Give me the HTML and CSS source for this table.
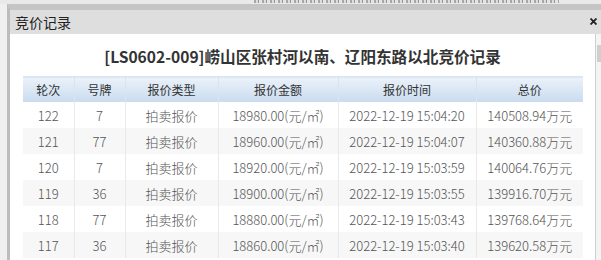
FILE: index.html
```html
<!DOCTYPE html>
<html lang="zh">
<head>
<meta charset="utf-8">
<link rel="stylesheet" href="styles.css">
</head>
<body>
<div class="page">
  <div class="topstrip"><div class="topmarks"></div></div>
  <div class="main">
    <div class="gutter"></div>
    <div class="dialog">
      <div class="titlebar">
        <span class="title">竞价记录</span>
        <svg class="close" width="7" height="7" viewBox="0 0 7 7"><path d="M0.5 0.5L6.5 6.5M6.5 0.5L0.5 6.5" stroke="#222" stroke-width="1.8"/></svg>
      </div>
      <div class="body">
        <div class="pane">
          <h1 class="heading">[LS0602-009]崂山区张村河以南、辽阳东路以北竞价记录</h1>
          <table class="grid">
            <colgroup>
              <col class="c1"><col class="c2"><col class="c3"><col class="c4"><col class="c5"><col class="c6">
            </colgroup>
            <thead>
              <tr><th>轮次</th><th>号牌</th><th>报价类型</th><th>报价金额</th><th>报价时间</th><th>总价</th></tr>
            </thead>
            <tbody>
              <tr><td>122</td><td>7</td><td>拍卖报价</td><td>18980.00(元/㎡)</td><td>2022-12-19 15:04:20</td><td>140508.94万元</td></tr>
              <tr><td>121</td><td>77</td><td>拍卖报价</td><td>18960.00(元/㎡)</td><td>2022-12-19 15:04:07</td><td>140360.88万元</td></tr>
              <tr><td>120</td><td>7</td><td>拍卖报价</td><td>18920.00(元/㎡)</td><td>2022-12-19 15:03:59</td><td>140064.76万元</td></tr>
              <tr><td>119</td><td>36</td><td>拍卖报价</td><td>18900.00(元/㎡)</td><td>2022-12-19 15:03:55</td><td>139916.70万元</td></tr>
              <tr><td>118</td><td>77</td><td>拍卖报价</td><td>18880.00(元/㎡)</td><td>2022-12-19 15:03:43</td><td>139768.64万元</td></tr>
              <tr><td>117</td><td>36</td><td>拍卖报价</td><td>18860.00(元/㎡)</td><td>2022-12-19 15:03:40</td><td>139620.58万元</td></tr>
            </tbody>
          </table>
        </div>
        <div class="track"><div class="thumb"></div></div>
      </div>
    </div>
  </div>
</div>
</body>
</html>
```

FILE: styles.css
```css
html, body {
  margin: 0;
  padding: 0;
}
body {
  width: 601px;
  height: 260px;
  overflow: hidden;
  background: #ededed;
  font-family: "Noto Sans CJK SC", "Microsoft YaHei", sans-serif;
}
.page {
  display: flex;
  flex-direction: column;
  height: 260px;
  overflow: hidden;
}
.topstrip {
  height: 4px;
  overflow: hidden;
  background: #e9e9e9;
  display: flex;
  justify-content: flex-end;
  padding-right: 42px;
}
.topmarks {
  width: 305px;
  height: 3px;
  background: repeating-linear-gradient(90deg, #8a8a8a 0 2px, #d8d8d8 2px 4px, #6f6f6f 4px 5px, #e2e2e2 5px 8px);
  opacity: 0.7;
}
.main {
  display: flex;
  flex: 1;
  min-height: 0;
}
.gutter {
  width: 7px;
  flex: none;
  background: #efefef;
}
.dialog {
  flex: 1;
  display: flex;
  flex-direction: column;
  border-top: 6px solid #c5c5c5;
  border-left: 3px solid #bcbcbc;
  background: #fff;
  min-width: 0;
}
.titlebar {
  height: 24px;
  flex: none;
  background: #dedede;
  display: flex;
  align-items: center;
  justify-content: space-between;
  padding-left: 5px;
  padding-right: 4px;
}
.title {
  font-size: 14px;
  color: #222;
  line-height: 24px;
}
.close {
  display: block;
  margin-top: -2px;
}
.body {
  flex: 1;
  display: flex;
  min-height: 0;
}
.pane {
  width: 585px;
  flex: none;
  border-right: 1px solid #cfcfcf;
  background: #fff;
}
.track {
  flex: 1;
  background: #f4f4f4;
  padding-top: 11px;
}
.thumb {
  width: 4px;
  height: 17px;
  margin-left: 1px;
  background: #cfcfcf;
}
.heading {
  margin: 0;
  padding-top: 12px;
  height: 30px;
  box-sizing: border-box;
  text-align: center;
  font-size: 15.6px;
  line-height: 20px;
  font-weight: 700;
  color: #333;
}
.grid {
  margin: 12px 0 0 13px;
  width: 560px;
  border-collapse: collapse;
  table-layout: fixed;
  border-top: 1px solid #dbe6f1;
}
.c1 { width: 51px; }
.c2 { width: 51px; }
.c3 { width: 93px; }
.c4 { width: 120px; }
.c5 { width: 138px; }
.c6 { width: 107px; }
.grid th {
  height: 25px;
  padding: 0;
  font-size: 12px;
  font-weight: 400;
  color: #333;
  background: linear-gradient(#ebf2fa, #c9dbee);
  border-left: 1px solid #d7e3ef;
  text-align: center;
}
.grid th:first-child,
.grid td:first-child {
  border-left: none;
}
.grid td {
  height: 26px;
  padding: 0;
  font-size: 13px;
  font-weight: 300;
  color: #555;
  text-align: center;
  border-left: 1px solid #e9e9e9;
  white-space: nowrap;
}
.grid tbody tr:nth-child(even) td {
  background: #f7f7f7;
}
```
